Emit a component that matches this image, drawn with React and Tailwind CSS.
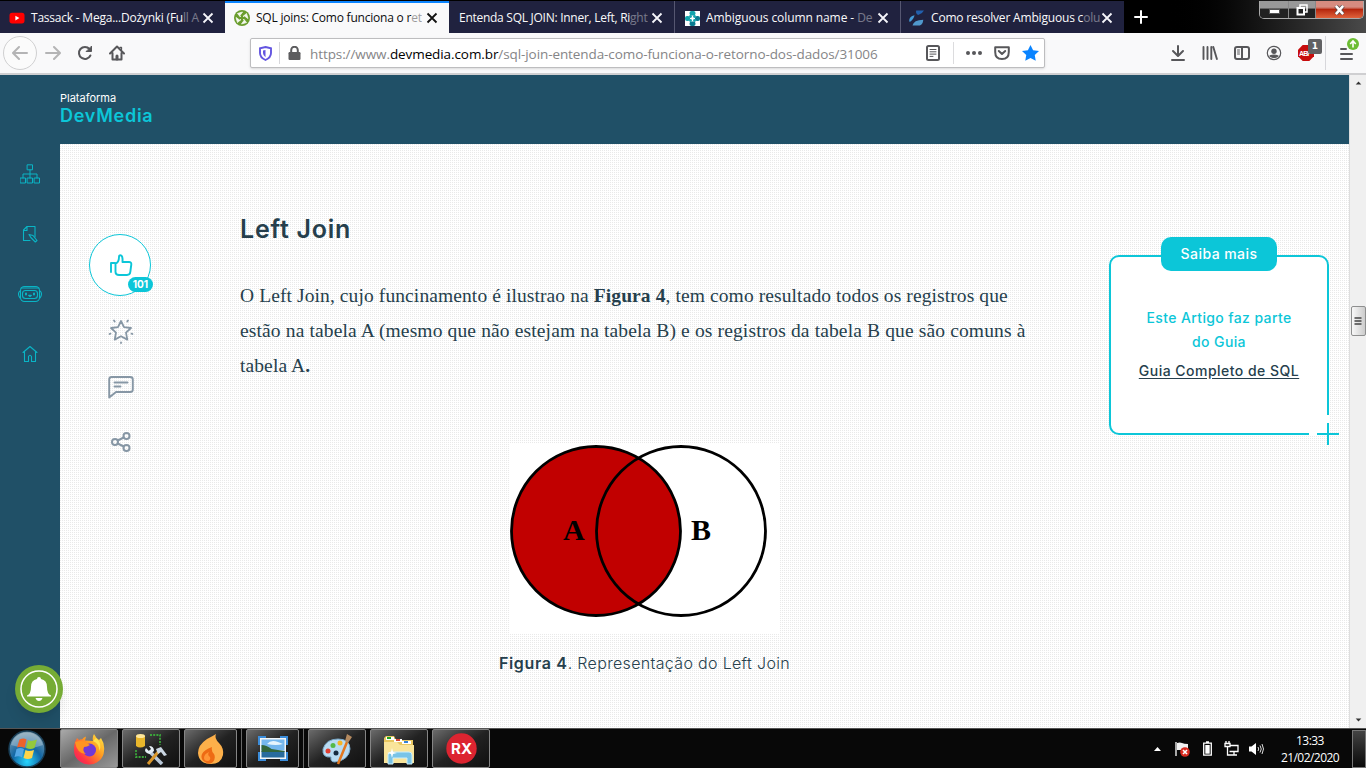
import React from "react";

const UI = "font-['Open_Sans','Noto_Sans',sans-serif]";
const GEO = "font-[Inter,sans-serif]";
const SERIF = "font-['Liberation_Serif',serif]";

function Close({ dark }) {
  return (
    <svg className="size-3 shrink-0" viewBox="0 0 12 12" fill="none" stroke={dark ? "#111" : "#f5f5fa"} strokeWidth="1.8">
      <path d="M1.5 1.5 10.5 10.5M10.5 1.5 1.5 10.5" />
    </svg>
  );
}

function Tab({ icon, title, faded, tracking, active, className }) {
  return (
    <div
      className={`flex h-8 items-center pr-[11px] ${active ? "border-t-2 border-[#0a84ff] bg-[#f9f9fa] text-[#0c0c0d]" : "bg-[#20223f] pt-0.5 text-[#f9f9fa]"} ${className}`}
    >
      {icon}
      <span className={`flex-1 text-[12px] leading-5 whitespace-nowrap ${tracking}`}>
        {title}
        <span className="opacity-40">{faded}</span>
      </span>
      <Close dark={active} />
    </div>
  );
}

const YouTube = (
  <svg className="mr-[6px] h-4 w-4 shrink-0" viewBox="0 0 16 16">
    <rect x="0.5" y="2.8" width="15" height="10.6" rx="2.6" fill="#f00" />
    <path d="M6.4 5.8v4.6l4-2.3z" fill="#fff" />
  </svg>
);
const GreenBall = (
  <svg className="mr-[6px] h-4 w-4 shrink-0" viewBox="0 0 16 16">
    <circle cx="8" cy="8" r="8" fill="#6a9d2d" />
    <path d="M3.500 3.500 8.500 2 6 5.500 6.500 7z M12.500 3.500 14 8.500 10.500 6 9 6.500z M12.500 12.500 7.500 14 10 10.500 9.500 9z M3.500 12.500 2 7.500 5.500 10 7 9.500z" fill="#f4f8ee" stroke="#f4f8ee" strokeWidth=".8" />
  </svg>
);
const Teal = (
  <svg className="mr-[6px] h-[15px] w-[15px] shrink-0" viewBox="0 0 15 15">
    <path d="M0 0h15v15H0z" fill="#fff" />
    <g fill="#12a3ad">
      <rect x="4.5" y="0" width="6" height="4.5" rx="2" />
      <rect x="4.5" y="10.5" width="6" height="4.5" rx="2" fill="#087b91" />
      <rect x="0" y="5" width="5" height="5" rx="2" />
      <rect x="10" y="5" width="5" height="5" rx="2" fill="#087b91" />
      <circle cx="5.500" cy="5.500" r="1.400" />
      <circle cx="9.500" cy="5.500" r="1.400" />
      <circle cx="5.500" cy="9.500" r="1.400" />
      <circle cx="9.500" cy="9.500" r="1.400" />
    </g>
  </svg>
);
const Swirl = (
  <svg className="mr-[6px] h-4 w-4 shrink-0" viewBox="0 0 16 16">
    <path d="M7.200.5H15q-1.800 3.500-5.800 4.400Q6.400 3.600 7.200.5" fill="#2260ad" />
    <path d="M.2 11Q0 6.500 5.500 5.200 5 9 .8 12z" fill="#439bd8" />
    <path d="M3.500 15.500q1-5.500 10.800-5.800-.4 4.700-3.500 5.800z" fill="#5099cd" />
  </svg>
);

function Ico({ children, className = "size-4", vb = "0 0 16 16", sw = 2, color = "#57575a" }) {
  return (
    <svg className={`shrink-0 ${className}`} viewBox={vb} fill="none" stroke={color} strokeWidth={sw} strokeLinecap="round" strokeLinejoin="round">
      {children}
    </svg>
  );
}

function TabBar() {
  return (
    <div className="flex h-[33px] bg-gradient-to-r from-[#000] from-85% to-[#4a4a4a] pt-px">
      <Tab className="w-[225px] pl-[9px]" icon={YouTube} title="Tassack - Mega...Dożynki (Fu" faded="ll A" tracking="tracking-[-0.22px]" />
      <Tab className="w-[224px] pl-[9px]" icon={GreenBall} active title="SQL joins: Como funciona o r" faded="et" tracking="tracking-[-0.22px]" />
      <Tab className="w-[225px] pl-[10px]" title="Entenda SQL JOIN: Inner, Left, Ri" faded="ght" tracking="tracking-[-0.27px]" />
      <Tab className="w-[226px] border-l border-l-[#565771] pl-[10px]" icon={Teal} title="Ambiguous column name - " faded="De" tracking="tracking-[-0.09px]" />
      <Tab className="w-[224px] border-l border-l-[#565771] pl-[8px]" icon={Swirl} title="Como resolver Ambiguous c" faded="olu" tracking="tracking-[-0.18px]" />
      <div className="flex w-[34px] items-center justify-center">
        <Ico className="size-[14px]" vb="0 0 14 14" color="#fff" sw={2}>
          <path d="M7 1v12M1 7h12" />
        </Ico>
      </div>
      <div className="mr-[2px] ml-auto flex h-[18px] w-[105px] overflow-hidden rounded-b-[5px] border border-t-0 border-[#aaa] text-white">
        <div className="flex w-[29px] items-center justify-center border-r border-[#888] bg-gradient-to-b from-[#999] from-40% to-[#222] to-50%">
          <svg className="mt-1 h-[5px] w-[11px]" viewBox="0 0 11 5"><path d="M.5.5h10v4H.5z" fill="#fff" stroke="#555" /></svg>
        </div>
        <div className="flex w-[27px] items-center justify-center border-r border-[#888] bg-gradient-to-b from-[#999] from-40% to-[#222] to-50%">
          <svg className="size-3" viewBox="0 0 12 12" fill="none" stroke="#fff" strokeWidth="1.5"><path d="M4 3V1h7v7H9" /><path d="M1.500 4h6.500v6.500H1.500z" strokeWidth="2" /></svg>
        </div>
        <div className="flex flex-1 items-center justify-center bg-gradient-to-b from-[#d78c80] from-35% via-[#b6260d] via-50% to-[#e0613a]">
          <svg className="h-[10px] w-[11px]" viewBox="0 0 12 11" fill="none"><path d="M2 1l8 9M10 1 2 10" stroke="#5a4a4a" strokeWidth="4.500" /><path d="M2 1l8 9M10 1 2 10" stroke="#fff" strokeWidth="2.800" /></svg>
        </div>
      </div>
    </div>
  );
}

function Toolbar() {
  return (
    <div className="flex h-[42px] items-center border-b-2 border-[#cfcfd1] bg-[#f9f9fa]">
      <div className="ml-[3px] flex size-[34px] items-center justify-center rounded-full border border-[#d0d0d1] bg-[#fbfbfb]">
        <Ico color="#b4b4b5"><path d="M15 8H1.500M7 2 1 8l6 6" /></Ico>
      </div>
      <div className="flex w-8 justify-center">
        <Ico color="#b4b4b5"><path d="M1 8h13.500M9 2l6 6-6 6" /></Ico>
      </div>
      <div className="flex w-8 justify-center">
        <Ico><path d="M13.400 10.500A6 6 0 1 1 12.500 4" /><path d="M14.500 1.500v5h-5z" fill="#57575a" strokeWidth="1" /></Ico>
      </div>
      <div className="flex w-8 justify-center">
        <Ico><path d="M1 8.500 8 1.500l7 7M3.500 8v6.500h9V8" /><path d="M8 11v3" strokeWidth="3" /><path d="M11 2.500h1.500v2" strokeWidth="1.300" /></Ico>
      </div>
      <div className="ml-[117px] flex h-[30px] w-[795px] items-center rounded-[2px] border border-[#bdbdbf] bg-white shadow-sm">
        <div className="flex h-[22px] w-[29px] items-center justify-center border-r border-[#d7d7db]">
          <svg className="h-[15px] w-[13px]" viewBox="0 0 13 15" fill="none">
            <path d="M6.500 1 12 2.300V7q0 4.500-5.500 7Q1 11.500 1 7V2.300z" stroke="#6355e0" strokeWidth="1.900" />
            <path d="M6.500 4v7.200Q4 9.500 4 7V4.500z" fill="#6355e0" />
          </svg>
        </div>
        <svg className="ml-2 h-[14px] w-[13px]" viewBox="0 0 13 14">
          <path d="M3.200 7V4a3.300 3.300 0 0 1 6.600 0v3" stroke="#5c5c5e" strokeWidth="2" fill="none" />
          <rect x=".5" y="6" width="12" height="8" rx="1.200" fill="#5c5c5e" />
        </svg>
        <span className="mt-0.5 ml-[9px] text-[13.5px] leading-5 tracking-[-0.09px] whitespace-nowrap text-[#858587]">
          https://www.<span className="text-black">devmedia.com.br</span>/sql-join-entenda-como-funciona-o-retorno-dos-dados/31006
        </span>
        <div className="ml-auto flex h-[22px] items-center">
          <div className="flex h-full w-[41px] items-center justify-center border-r border-[#dcdcde]">
            <Ico><rect x="2" y="1" width="12" height="14" rx="1.500" /><path d="M5 4.500h6M5 6.800h6M5 9.100h6M5 11.400h3" strokeWidth="1" /></Ico>
          </div>
          <div className="flex w-10 justify-center">
            <svg className="size-4" viewBox="0 0 16 16" fill="#57575a"><circle cx="2" cy="8" r="2" /><circle cx="8" cy="8" r="2" /><circle cx="14" cy="8" r="2" /></svg>
          </div>
          <div className="flex w-4 justify-center">
            <Ico><path d="M1.200 2.200h13.600v4.800q0 7-6.800 7t-6.800-7z" /><path d="m4.800 6 3.200 3 3.200-3" /></Ico>
          </div>
          <svg className="mr-[5px] ml-3 h-4 w-[17px]" viewBox="0 0 24 24" preserveAspectRatio="none" fill="#0a84ff"><path d="m12 0 3.700 7.800 8.300 1.200-6 6 1.400 8.700L12 19.600 4.600 23.700 6 15 0 9l8.300-1.200z" /></svg>
        </div>
      </div>
      <div className="ml-auto flex h-full items-center">
        <div className="flex w-8 justify-center"><Ico><path d="M8 1v9.500M3 6l5 5 5-5M2 15h12" /></Ico></div>
        <div className="flex w-8 justify-center"><Ico sw={1.900}><path d="M1.500 2v12M5.500 2v12M9.300 2v12M11.300 2l3.600 12" /></Ico></div>
        <div className="flex w-8 justify-center"><Ico><rect x="1" y="2" width="14" height="12" rx="2" /><path d="M8 2.500v11" /><path d="M3.500 5h2M3.500 7h2M3.500 9h2" strokeWidth="1" /></Ico></div>
        <div className="flex w-8 justify-center"><Ico sw={1.200}><circle cx="8" cy="8" r="6.700" /><circle cx="8" cy="6.300" r="2.700" fill="#57575a" stroke="none" /><path d="M4 11q4-2 8 0-4 3-8 0" fill="#57575a" /></Ico></div>
        <div className="relative flex w-8 justify-center">
          <svg className="size-4" viewBox="0 0 16 16">
            <path d="M4.700 0h6.600L16 4.700v6.600L11.300 16H4.700L0 11.300V4.700z" fill="#c70d0d" />
            <text x="1" y="11" fontSize="7" fontWeight="700" fill="#fff" fontFamily="Liberation Sans" textLength="13">ABP</text>
          </svg>
          <span className="absolute -top-[6px] left-[18px] flex h-[15px] w-[14px] items-center justify-center rounded-[2px] bg-[#616163] font-[DejaVu_Sans,sans-serif] text-[9px] font-bold text-white">1</span>
        </div>
        <div className="relative ml-[3px] flex h-[34px] w-[41px] items-center justify-center border-l border-[#d7d7db]">
          <Ico className="mt-px h-3 w-[13px]" vb="0 0 13 12"><path d="M1 1h5M1 6h11M1 11h11" /></Ico>
          <svg className="absolute top-[2px] left-[21px] size-3" viewBox="0 0 12 12"><circle cx="6" cy="6" r="6" fill="#6cbd33" /><path d="M6 9.500v-6M3.200 6 6 3l2.800 3" stroke="#fff" strokeWidth="1.600" fill="none" /></svg>
        </div>
      </div>
    </div>
  );
}

function SideNav() {
  return (
    <nav className="flex w-[60px] shrink-0 flex-col items-center bg-[#205067]">
      {[
        <Ico key="a" className="size-5" vb="0 0 20 20" sw={1} color="#0ab4c5"><path d="M7.500.8h5v5h-5zM.5 14h5v5h-5zM7.500 14h5v5h-5zM14.500 14h5v5h-5zM10 6v8M3 14V10h14v4" /></Ico>,
        <Ico key="b" className="size-5" vb="0 0 20 20" sw={1.100} color="#0ab4c5"><path d="M10 16.500H3.500V6l3.500-3.500h8V13M3.500 6.500H7v-4" /><path d="M9 10.500l4 1 4 5-1.700 1.500-4.500-4.500z" /></Ico>,
        <Ico key="c" className="h-5 w-6" vb="0 0 24 20" sw={1.100} color="#0ab4c5"><rect x="2.500" y="2.500" width="19" height="15" rx="4" /><rect x="4.500" y="6.500" width="15" height="8" rx="3" /><path d="M3 4h18M2 7Q.5 8 .5 10t1.500 4M22 7q1.500 1 1.500 3T22 14" /><path d="M8 9.500v1M16 9.500v1" strokeWidth="2" /><path d="M10.800 11.500h2.400l-1.200.800z" strokeWidth="1.400" /></Ico>,
        <Ico key="d" className="size-5" vb="0 0 20 20" sw={1.100} color="#0ab4c5"><path d="M3 8.500 10 2.500l7 6M4.500 7.500v10h4v-5q1.500-2.500 3 0v5h4v-10" /></Ico>,
      ].map((icon, i) => (
        <div key={i} className="flex h-[60px] items-center">{icon}</div>
      ))}
    </nav>
  );
}

function Reactions() {
  return (
    <div className="flex w-[120px] shrink-0 flex-col items-center pt-[90px]">
      <div className="relative flex size-[62px] items-center justify-center rounded-full border border-[#0cc6d8] bg-white">
        <Ico className="ml-px size-6" vb="0 0 24 24" sw={1.900} color="#0cc6d8"><path d="M2 19V10h4M6.500 10.500c3-1 3.500-3.500 3.500-6.500q0-1.800 1.300-1.800Q14 2.200 13.500 9H20q2.500 0 2.300 2.500l-1 7.500Q21 22 18 22h-8q-3.500 0-3.500-3z" /></Ico>
        <span className={`absolute top-[42px] left-[38px] flex h-[15px] w-[25px] items-center justify-center rounded-full bg-[#0cc6d8] text-[10px] font-bold text-white ${GEO}`}>101</span>
      </div>
      <Ico className="mt-[22px] ml-px size-[26px]" vb="0 0 26 26" sw={1.800} color="#8797a5"><path d="m13 3 3 6.200 7 .8-5 4.600 1.300 7L13 18.200l-6.300 3.400 1.300-7L3 10l7-.8zM6 2.500l.7 1M20 2.500l-.7 1M1.500 16l1-.4M24.500 16l-1-.4M13 24.500v.5" /></Ico>
      <Ico className="mt-[31px] ml-px h-6 w-[26px]" vb="0 0 26 24" sw={1.900} color="#8797a5"><path d="M1.200 22.500V4.500q0-2.500 2.500-2.500h18.600q2.500 0 2.500 2.500v10q0 2.500-2.500 2.500H8zM6.500 7.500h13M6.500 11.500h6" /></Ico>
      <Ico className="mt-[33px] ml-px size-5" vb="0 0 20 20" sw={2} color="#8797a5"><circle cx="4" cy="10" r="3" /><circle cx="15.500" cy="4" r="3" /><circle cx="15.500" cy="16" r="3" /><path d="m6.700 8.500 6-3M6.700 11.500l6 3" /></Ico>
    </div>
  );
}

function Article() {
  return (
    <article className="ml-[60px] w-[809px] shrink-0 text-[#263f4d]">
      <h2 className={`mt-[69px] text-[25px] leading-8 font-semibold tracking-[0.75px] ${GEO}`}>Left Join</h2>
      <div className={`mt-[33px] text-[19.5px] leading-[35px] whitespace-nowrap ${SERIF}`}>
        <p className="tracking-[0.1px]">O Left Join, cujo funcinamento é ilustrao na <b>Figura 4</b>, tem como resultado todos os registros que</p>
        <p className="tracking-[0.137px]">estão na tabela A (mesmo que não estejam na tabela B) e os registros da tabela B que são comuns à</p>
        <p className="tracking-[0.1px]">tabela A<b>.</b></p>
      </div>
      <figure className="mt-[60px] flex flex-col items-center">
        <svg className="h-[190px] w-[270px] bg-white" viewBox="0 0 270 190">
          <circle cx="86" cy="88" r="84.500" fill="#c10000" />
          <g fill="none" stroke="#000" strokeWidth="2.800"><circle cx="86" cy="88" r="84.500" /><circle cx="171" cy="88" r="84.500" /></g>
          <g fontFamily="Liberation Serif" fontWeight="700" fontSize="30"><text x="53" y="97">A</text><text x="181" y="97">B</text></g>
        </svg>
        <figcaption className={`mt-[18px] text-[16px] leading-6 font-light tracking-[0.33px] whitespace-nowrap ${GEO}`}><b className="font-semibold tracking-[0.65px]">Figura 4</b>. Representação do Left Join</figcaption>
      </figure>
    </article>
  );
}

function GuideCard() {
  return (
    <aside className={`relative mt-[111px] ml-[60px] flex h-[180px] w-[220px] shrink-0 flex-col items-center rounded-[10px] border-2 border-[#0cc6d8] bg-white text-[14px] font-medium ${GEO}`}>
      <div className="-mt-5 flex h-[34px] w-[116px] shrink-0 items-center justify-center rounded-[10px] bg-[#0cc6d8] pb-0.5 tracking-[0.45px] text-white">Saiba mais</div>
      <p className="mt-[35px] text-center leading-6 tracking-[0.38px] text-[#0cc6d8]">Este Artigo faz parte<br />do Guia</p>
      <a className="mt-[5px] leading-6 tracking-[0.48px] text-[#263f4d] underline underline-offset-2">Guia Completo de SQL</a>
      <svg className="absolute top-[157px] left-[197px] size-8" viewBox="0 0 32 32">
        <path d="M1 1h20v20H1z" fill="#fff" />
        <path d="M9 20h22M20 9v22" stroke="#0cc6d8" strokeWidth="2" />
      </svg>
    </aside>
  );
}

function Scrollbar() {
  return (
    <div className="flex h-full w-[17px] shrink-0 flex-col items-center border-l border-[#ddd] bg-[#f0f0f0]">
      <svg className="mt-[6px] h-[4px] w-[7px]" viewBox="0 0 7 5"><path d="M0 4.500 3.500.5 7 4.500z" fill="#333" /></svg>
      <div className="mt-[221px] flex h-[30px] w-[15px] items-center justify-center rounded-[2px] border border-[#8e8f8f] bg-gradient-to-r from-[#f8f8f8] to-[#ccc]">
        <svg className="size-2" viewBox="0 0 8 8"><path d="M.5 1h7M.5 4h7M.5 7h7" stroke="#444" strokeWidth="1.300" /></svg>
      </div>
      <svg className="mt-auto mb-[6px] h-[4px] w-[7px]" viewBox="0 0 7 5"><path d="M0 .5 3.500 4.500 7 .5z" fill="#333" /></svg>
    </div>
  );
}

const taskIcons = {
  firefox: (
    <svg className="size-8" viewBox="0 0 32 32">
      <defs>
        <linearGradient id="fx" x1="1" y1="0" x2="0" y2="1"><stop offset="0" stopColor="#fff14a" /><stop offset=".4" stopColor="#ff9a20" /><stop offset=".75" stopColor="#ff3545" /><stop offset="1" stopColor="#e81870" /></linearGradient>
      </defs>
      <path d="M2 9 4 5l2 2q2-1 3-.500 1-2 4-3l-1 4 8 .500Q19 4 21 1q2 4 5 6l2-2q4 6 3 13a15 14 0 0 1-30-1Q1 12 2 9" fill="url(#fx)" />
      <circle cx="16.500" cy="17" r="6.500" fill="#7139d7" />
      <path d="M2 9q6-2 10 0 3 2 5 3-3 2-6 2-2 4 2 7-9 0-11-12" fill="#ff9420" />
      <path d="M20 8q7 3 6 10 4-7-3-13z" fill="#ffe34a" />
    </svg>
  ),
  tools: (
    <svg className="size-8" viewBox="0 0 32 32">
      <path d="M1 3v10q4 3 9 0V3" fill="#e9b62b" /><ellipse cx="5.500" cy="3" rx="4.500" ry="2" fill="#ffe79a" />
      <path d="M15 2h10v10M1 17v7h10" fill="none" stroke="#3aa53a" strokeWidth="1.800" strokeDasharray="2 1.200" />
      <path d="m14 18 13 13" stroke="#b9c8d8" strokeWidth="3.500" /><path d="m10 17 1-2 3 3 2-2-2-3q5 0 5 5l-4 3q-5-1-5-4" fill="#e5edf5" />
      <path d="m13 31 11-13" stroke="#d9962a" strokeWidth="3" /><path d="m21 16 5-2 6 8-3 1-3-4-3 2z" fill="#cbd7e3" />
    </svg>
  ),
  flame: (
    <svg className="size-8" viewBox="0 0 32 32">
      <path d="M21 1q-2 4 3 9 5 5 4 12-2 9-12 9Q4 31 3 20 3 12 12 6q6-3 9-5" fill="#fdb04a" />
      <path d="M17 14q-1 4 2 7 2 4-1 8-4 3-8 0-5-3-3-8 2-4 10-7" fill="#ee6b14" />
      <path d="M14 19q-2 3 1 5 1 3-2 4-4 0-4-3 0-4 5-6" fill="#ff9636" />
    </svg>
  ),
  picture: (
    <svg className="size-8" viewBox="0 0 32 32">
      <path d="M1 3h8v4H5v5H1zM31 3h-8v4h4v5h4zM1 28h8v-4H5v-5H1zM31 28h-8v-4h4v-5h4z" fill="#3b8ddb" />
      <path d="M3 5h26v21H3z" fill="#f3f6f8" /><path d="M4.500 6.500h23v11h-23z" fill="#75b7ee" /><path d="M4.500 18q8 1 23 0v6.500h-23z" fill="#286b9e" />
      <path d="M4.500 12q5 0 10 4l13 2v1h-23z" fill="#33663c" /><path d="M10 11q4-5 11-2l5 2q-7 2-16 0" fill="#e7f4fd" />
    </svg>
  ),
  paint: (
    <svg className="size-8" viewBox="0 0 32 32">
      <path d="M2 16Q5 6 17 6q12 0 12 10-1 11-15 13-5 0-4-5-9 1-8-8" fill="#b9dcf3" stroke="#7aa9c9" />
      <circle cx="7" cy="18" r="2.500" fill="#e13e31" /><circle cx="12" cy="12.500" r="2.500" fill="#55b948" /><circle cx="19" cy="10" r="2.500" fill="#f4b529" /><circle cx="15" cy="20" r="2.500" fill="#172c40" />
      <path d="m17 31 9-22" stroke="#e37820" strokeWidth="2.500" /><path d="m24 8 2-7 5 3-4 6z" fill="#b48a60" />
    </svg>
  ),
  folder: (
    <svg className="size-8" viewBox="0 0 32 32">
      <path d="M1 5l2-2h8l2 4h17v22H1z" fill="#e9c760" /><path d="M3 4h8v3H3zM11 6h8v3h-8zM19 8h9v3h-9z" fill="#fff" />
      <path d="M4 4h4v2H4z" fill="#20a520" /><path d="M13 6h4v2h-4z" fill="#d34634" /><path d="M21 8h4v2h-4z" fill="#3482d5" />
      <path d="M1 9h13l3 3h14v18H1z" fill="#f9e49a" /><path d="M5 31v-9q0-3 3-3h18q3 0 3 3v9h-5v-6H10v6z" fill="#79c4e7" stroke="#cceffc" />
      <path d="m9 15 1 4 4 1-4 1-1 4-1-4-4-1 4-1z" fill="#fff" />
    </svg>
  ),
  rx: (
    <svg className="size-[31px]" viewBox="0 0 31 31"><circle cx="15.500" cy="15.500" r="15.200" fill="#dc2430" /><text x="5" y="20.700" fontFamily="Inter" fontWeight="700" fontSize="14.500" fill="#fff" textLength="21" lengthAdjust="spacingAndGlyphs">RX</text></svg>
  ),
};

function Task({ icon, active, stack }) {
  return (
    <div className={`flex h-[39px] w-[58px] ${stack ? "border-r border-[#686868]" : ""}`}>
      <div className={`flex items-center justify-center rounded-[2px] border border-[#858585] ${stack ? "w-[53px]" : "w-[58px]"} ${active ? "bg-gradient-to-br from-[#aaa] via-[#686868] to-[#999]" : "bg-gradient-to-br from-[#6b6b6b] via-[#222] via-50% to-[#111]"}`}>
        {taskIcons[icon]}
      </div>
    </div>
  );
}

function Taskbar() {
  return (
    <footer className="flex h-10 border-t border-[#555] bg-[#080808]">
      <div className="flex w-[60px] items-center pl-2">
        <svg className="size-[38px]" viewBox="0 0 38 38">
          <defs><radialGradient id="orb" cx=".5" cy=".85" r=".8"><stop offset="0" stopColor="#27d6ff" /><stop offset=".5" stopColor="#1267a5" /><stop offset="1" stopColor="#7798ab" /></radialGradient></defs>
          <circle cx="19" cy="19" r="18" fill="url(#orb)" stroke="#183d55" strokeWidth="1.500" />
          <path d="M3 15a16.500 16.500 0 0 1 32 0q-14 6-32 0" fill="#fff" opacity=".28" />
          <path d="M11.500 9.500q4-2 7 0L16.500 18q-3-2-7.500-.500z" fill="#ec622b" /><path d="M20 10q3 2 9-.500L26.500 18q-4 2-8.500 0z" fill="#94c83e" />
          <path d="M8.500 19q4-2 7.500 0l-2 8.500q-3-2-7.500-.500z" fill="#55a7e5" /><path d="M17.500 20q3 2 8.500 0l-2 8q-4 2-8.500 0z" fill="#ffd54a" />
        </svg>
      </div>
      <div className="flex gap-1">
        <Task icon="firefox" active /><Task icon="tools" /><Task icon="flame" stack /><Task icon="picture" stack /><Task icon="paint" /><Task icon="folder" /><Task icon="rx" />
      </div>
      <div className="ml-auto flex items-center text-white">
        <svg className="h-1 w-[7px]" viewBox="0 0 7 4"><path d="M0 4 3.500 0 7 4z" fill="#fff" /></svg>
        <svg className="ml-[13px] size-4" viewBox="0 0 16 16"><path d="M2 1v14" stroke="#fff" strokeWidth="1.300" /><path d="M3 2q3-1 5 0t6 1v7q-3-1-6-1t-5 0z" fill="#f2f2f2" /><circle cx="11" cy="11" r="4.800" fill="#d92b20" /><path d="m9 9 4 4M13 9l-4 4" stroke="#fff" strokeWidth="1.600" /></svg>
        <svg className="ml-[13px] h-[15px] w-[9px]" viewBox="0 0 9 15"><path d="M.7 2.200h7.600v12H.7zM3 .8h3" stroke="#fff" strokeWidth="1.300" fill="none" /><path d="M2.300 4h4.400v8.700H2.300z" fill="#fff" /></svg>
        <svg className="ml-3 h-4 w-[15px]" viewBox="0 0 15 16" fill="none" stroke="#fff" strokeWidth="1.300"><path d="M1 2.500h5v3H1zM2 0v2.500M5 0v2.500M3.500 5.500V14H7M6.500 4.500H14v6H5.500M10 10.500V14M6 14h7" /></svg>
        <svg className="ml-[10px] h-4 w-[15px]" viewBox="0 0 15 16"><path d="M0 5.500h2.500L7 2v12l-4.500-3.500H0z" fill="#fff" /><path d="M9 6q1.500 2 0 4M11 4.500q2.500 3.500 0 7M13 3q3 5 0 10" stroke="#ddd" fill="none" /></svg>
        <div className="mr-[2px] ml-[15px] flex w-[62px] flex-col items-center text-[12px] leading-[17px] tracking-[-0.55px] whitespace-nowrap"><span>13:33</span><span>21/02/2020</span></div>
        <div className="ml-[9px] h-[38px] w-[14px] border border-[#777] bg-gradient-to-b from-[#444] to-[#0a0a0a]" />
      </div>
    </footer>
  );
}

export default function App() {
  return (
    <div className={`flex h-[768px] w-[1366px] flex-col overflow-hidden bg-black ${UI}`}>
      <TabBar />
      <Toolbar />
      <div className="relative flex h-[653px] w-full">
        <div className="flex min-w-0 flex-1 flex-col">
          <header className={`flex h-[69px] shrink-0 flex-col bg-[#205067] pt-4 pl-[60px] ${GEO}`}>
            <span className="text-[11px] leading-[14px] text-white">Plataforma</span>
            <span className="text-[18px] leading-[22px] font-semibold tracking-[0.75px] text-[#0cc6d8]">DevMedia</span>
          </header>
          <div className="flex flex-1">
            <SideNav />
            <main className="flex flex-1 bg-[conic-gradient(#fff_75%,#e9e9e9_0)] bg-[length:2px_2px]">
              <Reactions />
              <Article />
              <GuideCard />
            </main>
          </div>
        </div>
        <Scrollbar />
        <div className="absolute top-[590px] left-[15px] flex size-12 items-center justify-center rounded-full bg-[#76ac35] shadow-lg">
          <svg className="size-[38px]" viewBox="0 0 38 38"><circle cx="19" cy="19" r="18" stroke="#fff" strokeWidth="1.500" fill="none" /><path d="M19 7q2 0 2 2 6 1 6 8 0 7 4 8.500v1H7v-1q4-1.500 4-8.500 0-7 6-8 0-2 2-2M15.500 28h7q-1 3-3.500 3t-3.500-3" fill="#fff" /></svg>
        </div>
      </div>
      <Taskbar />
    </div>
  );
}
